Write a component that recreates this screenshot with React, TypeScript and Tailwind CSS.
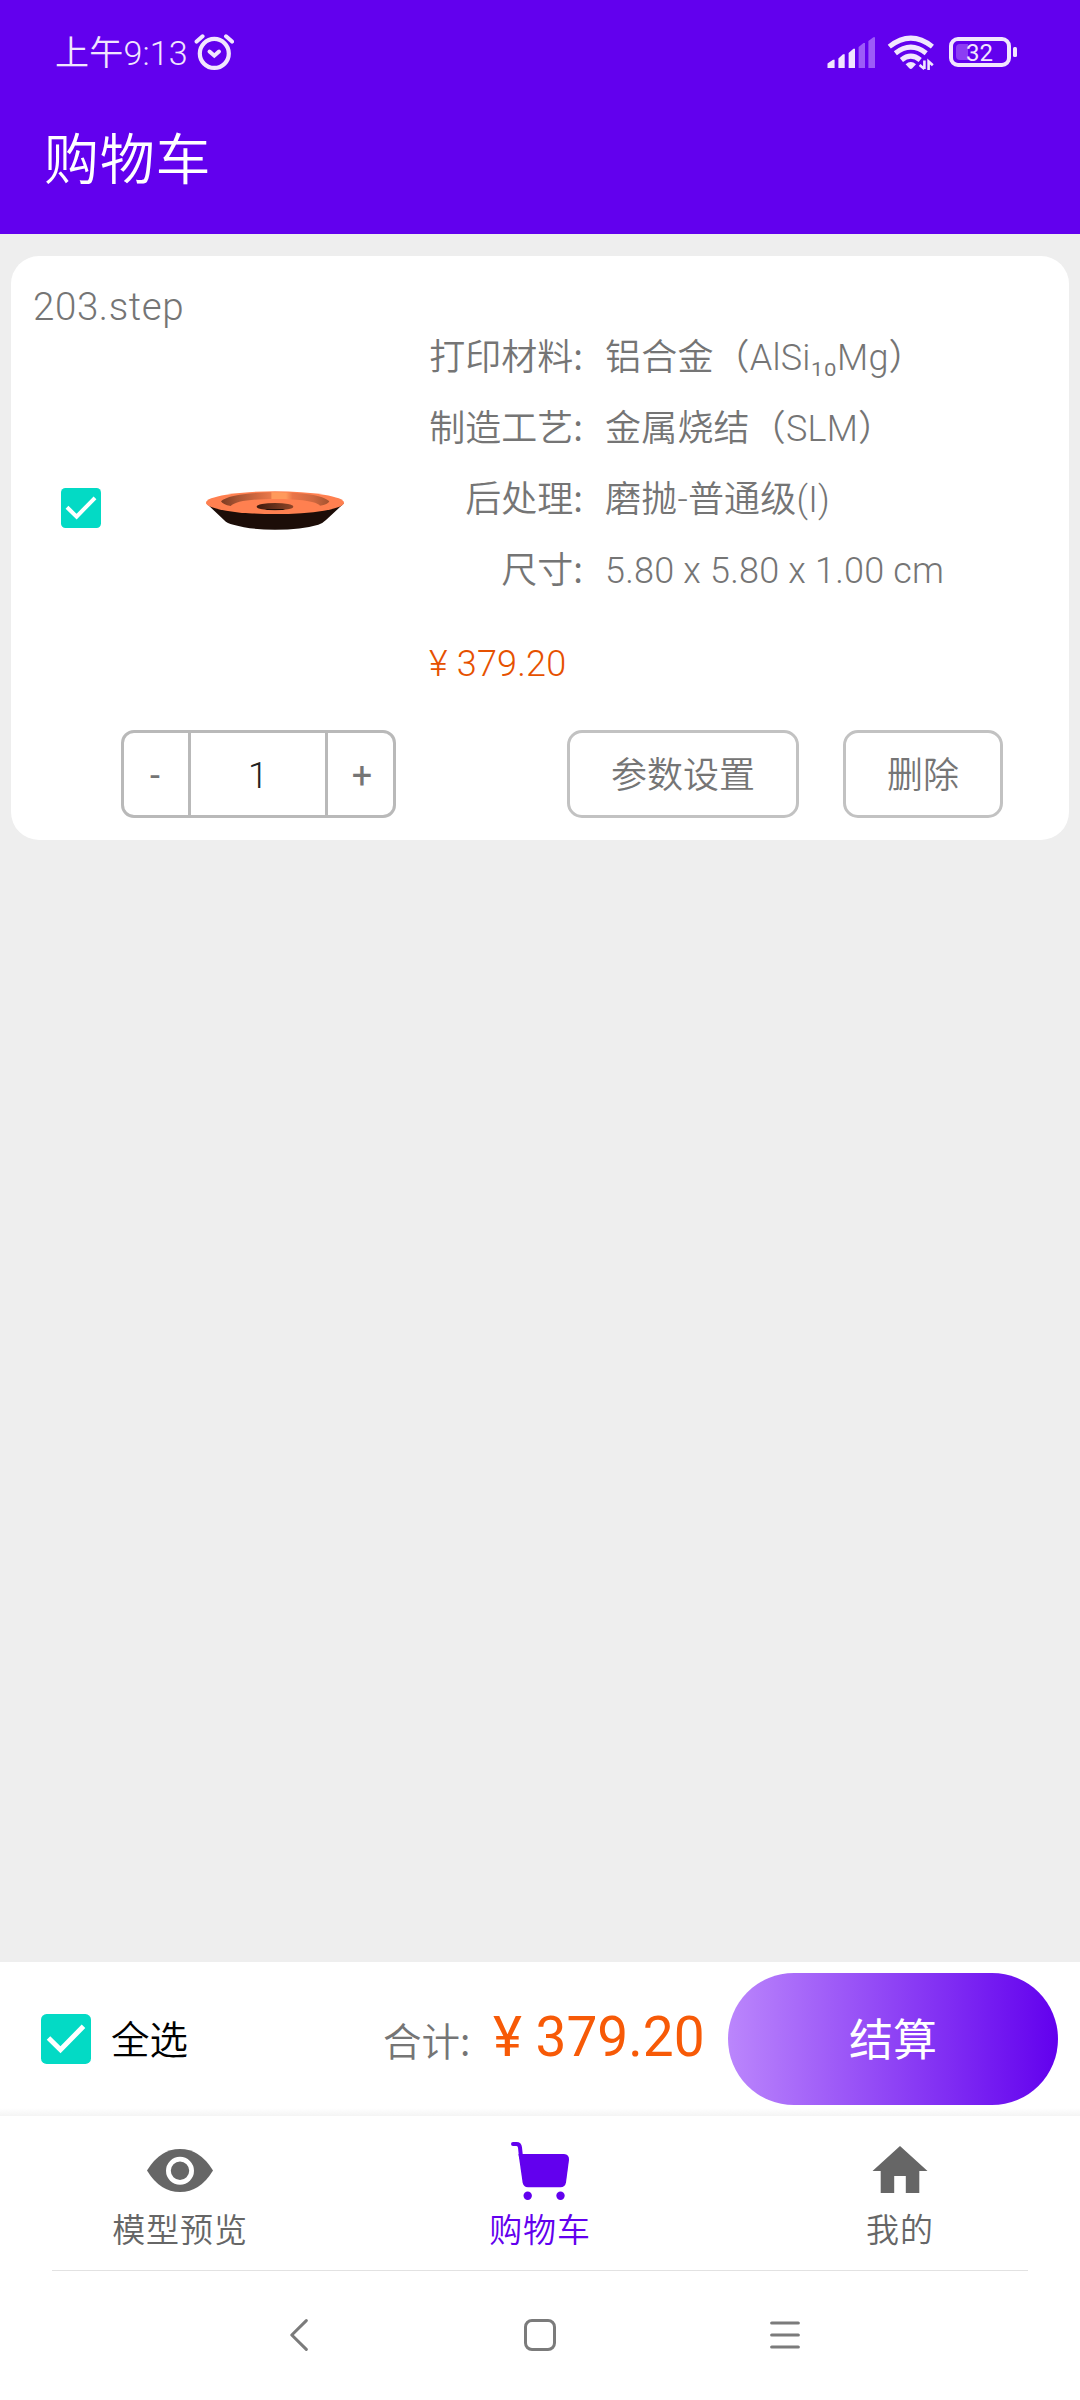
const specs = [
  { label: "打印材料", value: "铝合金（AlSi₁₀Mg）" },
  { label: "制造工艺", value: "金属烧结（SLM）" },
  { label: "后处理", value: "磨抛-普通级(I)" },
  { label: "尺寸", value: "5.80 x 5.80 x 1.00 cm" },
];

function StatusBar() {
  return (
    <div className="flex h-[106px] items-center justify-between pl-[55px] pr-[63px] text-[#f1e6fe]">
      <div className="flex items-center gap-[6px]">
        <span className="text-[34px] leading-[40px] tracking-[0.2px]">上午9:13</span>
        <svg className="h-[40px] w-[40px]" viewBox="194 33 40 40" fill="none" stroke="currentColor" strokeLinecap="round">
          <circle cx="214.3" cy="53.4" r="14.5" strokeWidth="4.2" />
          <path d="M196.6 41.6 202.6 36.3M226 36.3 232 41.6" strokeWidth="4" />
          <path d="M209.5 51.5 214.3 55.7 219 51.5" strokeWidth="4" />
        </svg>
      </div>
      <svg className="h-[36px] w-[190px]" viewBox="827 35 190 36" fill="none">
        <path
          d="M827.5 63.5 833 59.7H834.6V68H827.5ZM838.4 58.5 843 54.2H844.7V68H838.4ZM848.6 53 853.4 48.7H855V68H848.6Z"
          fill="#f1e6fe"
        />
        <path d="M858.6 47 863.5 43H865V68H858.6ZM868.4 41 873.4 37.2H875V68H868.4Z" fill="#9c5bf8" />
        <g stroke="#f1e6fe" strokeWidth="5">
          <path d="M889.3 46.6Q910.8 29.6 932.4 46.6" />
          <path d="M895.4 53.2Q910.8 41 926.2 53.2" />
          <path d="M901.4 60Q910.8 52.4 920.2 60" />
        </g>
        <path d="M905.6 64.2Q910.8 60 916 64.2L912.3 68.3Q910.8 69.6 909.3 68.3Z" fill="#f1e6fe" />
        <path d="M924.4 60.5V69M919.6 65 924.4 69M928.6 70V61.5L932.8 65.2" stroke="#f1e6fe" strokeWidth="2.6" />
        <rect x="951" y="39" width="58" height="26" rx="7" stroke="#f1e6fe" strokeWidth="4" />
        <path d="M968 44H960Q956 44 956 48V56Q956 60 960 60H968Z" fill="#8c3df3" />
        <rect x="1013" y="47" width="4" height="10" rx="1.5" fill="#f1e6fe" />
        <text x="979.5" y="61" fontSize="24" fontWeight="400" textAnchor="middle" fill="#f1e6fe">
          32
        </text>
      </svg>
    </div>
  );
}

function Checkbox({ className }: { className: string }) {
  return (
    <svg className={className} viewBox="0 0 40 40">
      <rect width="40" height="40" rx="4.5" fill="#03dac5" />
      <path d="M6 19.2 15.6 28.6 34 9.8" fill="none" stroke="#fff" strokeWidth="4" />
    </svg>
  );
}

function ModelPreview() {
  return (
    <svg className="h-[44px] w-[140px]" viewBox="615 744 420 132">
      <defs>
        <linearGradient id="wall" x1="0" x2="1" y1="0" y2="0">
          <stop offset="0" stopColor="#7d3c22" />
          <stop offset="0.15" stopColor="#a85433" />
          <stop offset="0.35" stopColor="#d46a40" />
          <stop offset="0.46" stopColor="#e8784a" />
          <stop offset="0.47" stopColor="#ff9a5c" />
          <stop offset="0.6" stopColor="#ff9a5c" />
          <stop offset="0.66" stopColor="#ea7548" />
          <stop offset="0.85" stopColor="#cf6840" />
          <stop offset="1" stopColor="#a4532f" />
        </linearGradient>
        <linearGradient id="hole" x1="0" x2="1" y1="0" y2="0">
          <stop offset="0" stopColor="#3d1a0e" />
          <stop offset="1" stopColor="#8f4528" />
        </linearGradient>
      </defs>
      <path d="M619 790 672 840Q682 851 700 854Q750 869 825 869Q905 869 955 854Q968 850 978 840L1032 790Z" fill="#1c0d08" />
      <ellipse cx="825" cy="788" rx="207" ry="34" fill="#ff8050" />
      <path d="M663 784C680 766 745 757 825 757S970 766 988 784Q984 794 960 797C950 784 900 777 825 777S706 784 692 798Q668 794 663 784Z" fill="url(#wall)" />
      <ellipse cx="825" cy="800" rx="55" ry="11" fill="url(#hole)" />
      <path d="M795 807H855L848 810H802Z" fill="#1c0d08" />
    </svg>
  );
}

function Colon() {
  return <span className="font-['Noto_Sans_CJK_SC',sans-serif] leading-none">:</span>;
}

function CartItem() {
  return (
    <div className="mx-[11px] mt-[22px] h-[584px] rounded-[28px] bg-white text-[#757575]">
      <div className="flex h-[474px]">
        <div className="w-[418px] pt-[21px]">
          <p className="pl-[22px] text-[38.5px] leading-[60px] tracking-[0.6px]">203.step</p>
          <div className="mt-[147px] flex items-center pl-[50px]">
            <Checkbox className="h-[40px] w-[40px]" />
            <div className="ml-[104px] mt-[4px]">
              <ModelPreview />
            </div>
          </div>
        </div>
        <div className="pt-[67px] text-[36px]">
          {specs.map((spec) => (
            <div key={spec.label} className="flex h-[71px] items-center leading-[71px]">
              <span className="w-[154px] text-right">
                {spec.label}
                <Colon />
              </span>
              <span className="ml-[22px] whitespace-nowrap tracking-[0.2px]">{spec.value}</span>
            </div>
          ))}
          <p className="mt-[29px] leading-[56px] tracking-[0.2px] text-[#e65100]">¥ 379.20</p>
        </div>
      </div>
      <div className="flex pl-[110px] text-[36px] leading-[86px]">
        <div className="flex h-[88px] w-[275px] overflow-hidden rounded-[13px] border-3 border-[#b9b9b9] text-center">
          <button className="w-[64px] pr-[2px] text-center font-normal">-</button>
          <span className="w-[140px] border-x-3 border-[#b9b9b9] text-[#212121]">1</span>
          <button className="flex-1 pl-[3px] font-normal">+</button>
        </div>
        <button className="ml-[171px] h-[88px] w-[232px] rounded-[15px] border-3 border-[#c2c2c2]">参数设置</button>
        <button className="ml-[44px] h-[88px] w-[160px] rounded-[15px] border-3 border-[#c2c2c2]">删除</button>
      </div>
    </div>
  );
}

function CheckoutBar() {
  return (
    <div className="flex h-[154px] items-start bg-linear-to-b from-white from-95% to-[#f4f4f4] pl-[41px] pt-[11px]">
      <Checkbox className="mt-[41px] h-[50px] w-[50px]" />
      <span className="ml-[20px] w-[80px] text-[38.5px] leading-[135px] text-black">全选</span>
      <span className="ml-[192px] w-[90px] text-[38.5px] leading-[140px] text-[#757575]">
        合计
        <Colon />
      </span>
      <span className="ml-[20px] w-[214px] whitespace-nowrap text-[55px] font-normal leading-[128px] text-[#f75a07]">
        ¥ 379.20
      </span>
      <button className="ml-auto mr-[22px] h-[132px] w-[330px] rounded-full bg-linear-to-r/srgb from-[#bb86fc] to-[#6200ee] text-[44px] font-normal leading-[137px] text-white">
        结算
      </button>
    </div>
  );
}

function TabBar() {
  return (
    <div className="grid h-[154px] grid-cols-3 text-[33px] leading-[44px] tracking-[0.9px] text-[#666]">
      <div className="flex flex-col items-center pt-[19px]">
        <svg className="h-[74px] w-[74px]" viewBox="143 2135 74 74">
          <path d="M147 2170.5Q160 2149 180 2149T213 2170.5Q200 2192 180 2192T147 2170.5Z" fill="#666" />
          <circle cx="180" cy="2170.8" r="11.6" fill="none" stroke="#fff" strokeWidth="4.8" />
        </svg>
        <span>模型预览</span>
      </div>
      <div className="flex flex-col items-center pt-[19px] text-[#6200ee]">
        <svg className="h-[74px] w-[74px]" viewBox="503 2135 74 74">
          <path d="M513 2144H516.5Q519.6 2144 520 2147.5L521 2157" fill="none" stroke="currentColor" strokeWidth="4" strokeLinecap="round" />
          <path
            d="M518.5 2154H564Q569.4 2154.5 569 2160L566 2182.5Q565 2187.3 560.5 2187.3H528Q523.4 2187 522.6 2182.5Z"
            fill="currentColor"
          />
          <circle cx="527.7" cy="2195.7" r="4.2" fill="currentColor" />
          <circle cx="560.5" cy="2195.7" r="4.2" fill="currentColor" />
        </svg>
        <span>购物车</span>
      </div>
      <div className="flex flex-col items-center pt-[19px]">
        <svg className="h-[74px] w-[74px]" viewBox="863 2135 74 74">
          <path d="M900 2146 927.5 2171H919.3V2193H905.8V2176H894.2V2193H880.7V2171H872.5Z" fill="#666" />
        </svg>
        <span>我的</span>
      </div>
    </div>
  );
}

function SystemNav() {
  return (
    <div className="flex h-[129px] items-center pb-[1px] pl-[290px] text-[#7b7b7b]">
      <svg className="h-[32px] w-[18px]" viewBox="0 0 18 32" fill="none" stroke="currentColor" strokeWidth="3" strokeLinecap="round" strokeLinejoin="round">
        <path d="M16.3 1.6 1.8 16 16.3 30.4" />
      </svg>
      <div className="ml-[216px] h-[32px] w-[32px] rounded-[8px] border-[3.5px] border-[#7b7b7b]" />
      <svg className="ml-[214px] h-[30px] w-[30px]" viewBox="0 0 30 30" stroke="currentColor" strokeWidth="3.2" strokeLinecap="round">
        <path d="M1.7 3H28.3M1.7 15H28.3M1.7 27H28.3" />
      </svg>
    </div>
  );
}

export default function App() {
  return (
    <div className="flex h-[2400px] w-[1080px] flex-col overflow-hidden bg-[#eee] font-['Roboto','Noto_Sans_CJK_SC',sans-serif] font-[350]">
      <header className="h-[234px] bg-[#6200ee] text-white">
        <StatusBar />
        <h1 className="pl-[44px] text-[55px] leading-[108px] tracking-[0.8px]">购物车</h1>
      </header>
      <main className="flex-1">
        <CartItem />
      </main>
      <CheckoutBar />
      <nav className="bg-white">
        <TabBar />
        <div className="mx-[52px] h-px bg-[#e2e2e2]" />
        <SystemNav />
      </nav>
    </div>
  );
}
